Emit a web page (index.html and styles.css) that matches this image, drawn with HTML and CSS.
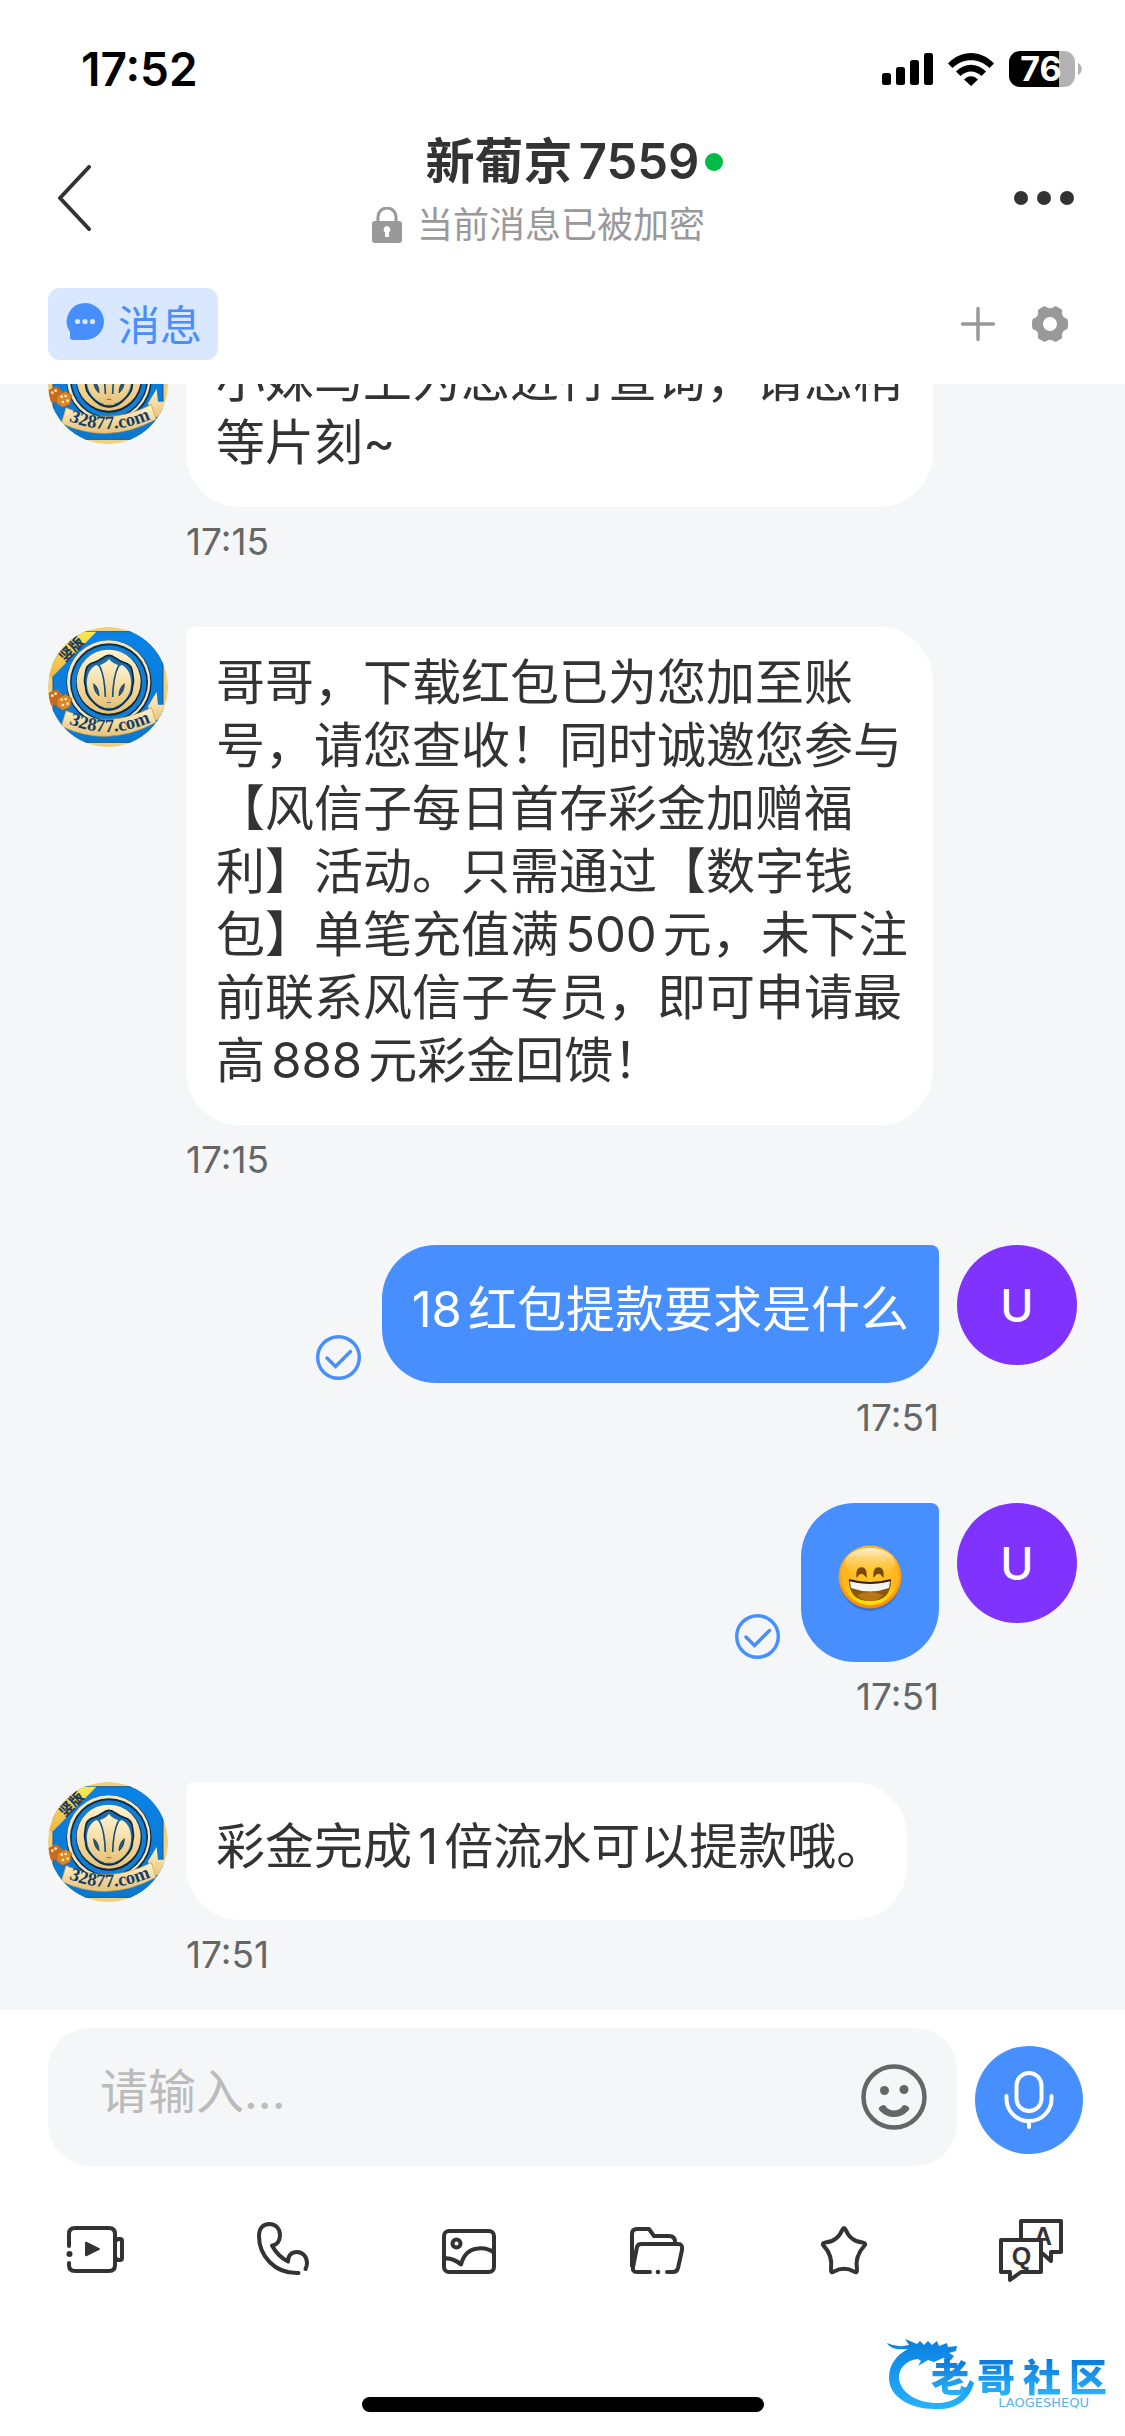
FILE: index.html
```html
<!DOCTYPE html>
<html lang="zh-CN">
<head>
<meta charset="utf-8">
<meta name="viewport" content="width=device-width, initial-scale=1">
<title>新葡京7559</title>
<link rel="stylesheet" href="styles.css">
</head>
<body>
<svg class="defs" aria-hidden="true">
  <defs>
    <linearGradient id="gold" x1="0" y1="0" x2="0" y2="1"><stop offset="0" stop-color="#fff3cf"/><stop offset="1" stop-color="#e8c276"/></linearGradient>
    <linearGradient id="blue" x1="0" y1="0" x2="0" y2="1"><stop offset="0" stop-color="#0a82e6"/><stop offset="1" stop-color="#0b78cf"/></linearGradient>
    <linearGradient id="corner" x1="0" y1="0" x2="0" y2="1"><stop offset="0" stop-color="#fbe94f"/><stop offset="1" stop-color="#f0b54a"/></linearGradient>
    <clipPath id="round"><circle cx="205" cy="202" r="180"/></clipPath>
    <symbol id="agent" viewBox="25 22 360 360">
      <g clip-path="url(#round)">
        <rect x="20" y="20" width="370" height="370" fill="#f0cf7d"/>
        <rect x="40" y="36" width="330" height="332" rx="6" fill="url(#blue)" stroke="#16588f" stroke-width="3"/>
        <path d="M20 36h150L40 170H20z" fill="url(#corner)"/>
        <text class="crest-corner" x="97" y="107" text-anchor="middle" transform="rotate(-45 92 92)">竖版</text>
        <circle cx="208" cy="190" r="128" fill="#0a3050"/>
        <circle cx="207" cy="187" r="125" fill="#f5e5b8"/>
        <circle cx="208" cy="188" r="117" fill="#0c2f4f"/>
        <circle cx="208" cy="189" r="112" fill="#127fd6"/>
        <circle cx="208" cy="189" r="99" fill="#10283c"/>
        <circle cx="207" cy="186" r="96" fill="url(#gold)"/>
        <path d="M208 107c-16 0-25 17-44 21-18 4-26 16-27 34-1 14-5 17-1 32 6 22-2 22 13 40 17 20 34 37 59 37s42-17 59-37c15-18 7-18 13-40 4-15 0-18-1-32-1-18-9-30-27-34-19-4-28-21-44-21z" fill="#1c6cab" stroke="#10283c" stroke-width="5"/>
        <path d="M208 118c8 10 16 14 27 18-14 36-14 70-16 112h-22c-2-42-2-76-16-112 11-4 19-8 27-18z" fill="url(#gold)"/>
        <path d="M170 136c21 10 29 52 32 128-36-6-58-36-60-66-2-26 6-52 28-62zM246 136c-21 10-29 52-32 128 36-6 58-36 60-66 2-26-6-52-28-62z" fill="url(#gold)"/>
        <path d="M193 250h30v14h-30z" fill="#e8c276"/>
        <path d="M162 192c0 16 5 27 16 37 0-16-5-29-16-37zM254 192c0 16-5 27-16 37 0-16 5-29 16-37z" fill="#1e5c8b" stroke="#10283c" stroke-width="2"/>
        <path d="M181 142c12 25 15 55 16 90M235 142c-12 25-15 55-16 90" fill="none" stroke="#16507c" stroke-width="5"/>
        <path d="M325 260l26-43 4 38h28v32l-45 20z" fill="url(#gold)"/>
        <path d="M22 222l28-14 18 16-6 28-40 8z" fill="#c96b1e"/>
        <path d="M52 236l26-12 18 12-5 26-22 10-18-12z" fill="#d98727" stroke="#b45d18" stroke-width="2"/>
        <g fill="#fff2bf"><circle cx="38" cy="228" r="4"/><circle cx="48" cy="222" r="4"/><circle cx="66" cy="240" r="4"/><circle cx="78" cy="238" r="4"/><circle cx="70" cy="256" r="4"/><circle cx="84" cy="252" r="4"/></g>
        <path d="M79 273Q205 330 335 264l14 44Q205 386 65 320z" fill="url(#gold)" stroke="#c79b49" stroke-width="2"/>
        <path id="banner" d="M76 308Q207 368 344 302" fill="none"/>
        <text class="crest-name"><textPath href="#banner" startOffset="50%" text-anchor="middle">32877.com</textPath></text>
      </g>
    </symbol>
    <symbol id="sent" viewBox="0 0 45 45">
      <circle cx="22.500" cy="22.500" r="20.800" fill="none" stroke="#478fff" stroke-width="3.400"/>
      <path d="M11 23l8.500 8.500L34.500 16.500" fill="none" stroke="#478fff" stroke-width="3.400" stroke-linecap="round"/>
    </symbol>
  </defs>
</svg>

<div class="app">
  <header class="top">
    <div class="status">
      <span class="clock">17:52</span>
      <div class="signals">
        <svg width="51" height="33" viewBox="0 0 51 33" aria-label="信号"><rect x="0" y="20" width="9" height="12" rx="2.500"/><rect x="14" y="14" width="9" height="18" rx="2.500"/><rect x="28" y="7" width="9" height="25" rx="2.500"/><rect x="42" y="0" width="9" height="32" rx="2.500"/></svg>
        <svg width="46" height="33" viewBox="0 0 46 33" aria-label="无线网络"><path d="M0 10.500C13-3.500 33-3.500 46 10.500L41.500 15C31 4.500 15 4.500 4.500 15zM8 18.500C17 9.500 29 9.500 38 18.500L33.500 23C27 17 19 17 12.500 23zM16 26.500c4-4.500 10-4.500 14 0L23 33z"/></svg>
        <svg class="cell" width="73" height="36" viewBox="0 0 73 36" aria-label="电量"><path d="M11 0h39v36H11A11 11 0 0 1 0 25V11A11 11 0 0 1 11 0z"/><path d="M50 0h5a11 11 0 0 1 11 11v14a11 11 0 0 1-11 11h-5zM69 12c5 2 5 10 0 12z" fill="#b3b3b3"/><text class="battery" x="32" y="30" text-anchor="middle">76</text></svg>
      </div>
    </div>
    <div class="nav">
      <button class="icon-btn back" aria-label="返回"><svg width="36" height="66" viewBox="0 0 36 66"><path d="M33 2L4 33l29 31" fill="none" stroke="#333" stroke-width="4" stroke-linecap="round" stroke-linejoin="round"/></svg></button>
      <div class="heading">
        <h1><span class="name">新葡京7559<i class="online"></i></span></h1>
        <p class="secure"><svg width="30" height="36" viewBox="0 0 30 36" aria-hidden="true"><path d="M6 16V10a9 9 0 0 1 18 0v6" fill="none" stroke="#999" stroke-width="3"/><path d="M3 14h24a3 3 0 0 1 3 3v16a3 3 0 0 1-3 3H3a3 3 0 0 1-3-3V17a3 3 0 0 1 3-3z" fill="#999"/><path d="M15 19a3.500 3.500 0 0 1 2 6.300V30h-4v-4.700A3.500 3.500 0 0 1 15 19z" fill="#fff"/></svg><span>当前消息已被加密</span></p>
      </div>
      <button class="icon-btn more" aria-label="更多"><svg width="60" height="14" viewBox="0 0 60 14"><g fill="#333"><circle cx="7" cy="7" r="7"/><circle cx="30" cy="7" r="7"/><circle cx="53" cy="7" r="7"/></g></svg></button>
    </div>
    <div class="tabs">
      <button class="tab"><svg width="38" height="38" viewBox="0 0 38 38" aria-hidden="true"><path d="M19 0a19 18.500 0 0 1 0 37H7q-3 0-3-3v-5A18.500 18.500 0 0 1 19 0z" fill="#478fff"/><g fill="#d9e7ff"><circle cx="11.500" cy="18.500" r="2.600"/><circle cx="19" cy="18.500" r="2.600"/><circle cx="26.500" cy="18.500" r="2.600"/></g></svg>消息</button>
      <div class="tab-actions">
        <button class="icon-btn" aria-label="添加"><svg width="36" height="36" viewBox="0 0 36 36"><path d="M18 2.500v31M2.500 18h31" stroke="#999" stroke-width="3.500" stroke-linecap="round"/></svg></button>
        <button class="icon-btn" aria-label="设置"><svg width="36" height="36" viewBox="0 0 36 36"><path fill="#999" fill-rule="evenodd" d="M12 .2Q13 0 14 .7q4 3.200 8 0Q23 0 24 .2l5.300 3q1 .8.700 2.300-.8 5.200 4 6.800 1.500.7 1.700 2 .6 3.700 0 7.400-.2 1.300-1.700 2-4.800 1.600-4 6.800.3 1.500-.7 2.300l-5.300 3q-1 .2-2-.5-4-3.200-8 0-1 .7-2 .5l-5.300-3q-1-.8-.7-2.300.8-5.200-4-6.800-1.500-.7-1.700-2-.6-3.700 0-7.400.2-1.300 1.700-2 4.800-1.600 4-6.800Q5.700 4 6.700 3.200zM18 11a7 7 0 1 0 0 14 7 7 0 0 0 0-14z"/></svg></button>
      </div>
    </div>
  </header>

  <main class="chat">
    <article class="msg received">
      <svg class="avatar" role="img" aria-label="客服头像"><use href="#agent"/></svg>
      <div class="body">
        <p class="bubble">小妹马上为您进行查询，请您稍等片刻~</p>
        <time>17:15</time>
      </div>
    </article>
    <article class="msg received">
      <svg class="avatar" role="img" aria-label="客服头像"><use href="#agent"/></svg>
      <div class="body">
        <p class="bubble">哥哥，下载红包已为您加至账号，请您查收！同时诚邀您参与【风信子每日首存彩金加赠福利】活动。只需通过【数字钱包】单笔充值满500元，未下注前联系风信子专员，即可申请最高888元彩金回馈！</p>
        <time>17:15</time>
      </div>
    </article>
    <article class="msg own">
      <div class="body">
        <div class="line"><svg class="tick" aria-label="已送达"><use href="#sent"/></svg><p class="bubble">18红包提款要求是什么</p></div>
        <time>17:51</time>
      </div>
      <span class="avatar user">U</span>
    </article>
    <article class="msg own">
      <div class="body">
        <div class="line"><svg class="tick" aria-label="已送达"><use href="#sent"/></svg><div class="bubble emoji">
          <svg width="66" height="69" viewBox="0 0 66 69" role="img" aria-label="笑脸">
            <defs>
              <radialGradient id="face" cx=".5" cy=".45" r=".55"><stop offset="0" stop-color="#ffc928"/><stop offset=".8" stop-color="#ffb41e"/><stop offset="1" stop-color="#f08208"/></radialGradient>
              <linearGradient id="shine" x1="0" y1="0" x2="0" y2="1"><stop offset="0" stop-color="#fff3dc"/><stop offset="1" stop-color="#ffc42a" stop-opacity="0"/></linearGradient>
              <linearGradient id="chin" x1="0" y1="0" x2="0" y2="1"><stop offset=".6" stop-color="#ffe600" stop-opacity="0"/><stop offset="1" stop-color="#ffe600"/></linearGradient>
            </defs>
            <ellipse cx="33" cy="35.500" rx="31" ry="31.500" fill="#2c62b8" opacity=".6"/>
            <circle cx="33" cy="33" r="31.500" fill="url(#face)"/>
            <circle cx="33" cy="33" r="28" fill="url(#chin)"/>
            <ellipse cx="33" cy="19" rx="25" ry="15" fill="url(#shine)"/>
            <path d="M20 32q-.500-8 4.500-8t4.500 8q-4.500-6-9 0zM37 32q-.500-8 4.500-8t4.500 8q-4.500-6-9 0z" fill="#7a4a08" stroke="#7a4a08" stroke-width="1.500"/>
            <path d="M12 36q21 6 42 0 0 21-21 21T12 36z" fill="#8a5608"/>
            <path d="M13 37q20 6 40 0l-1 7q-19 7-38 0z" fill="#f4f4f2"/>
            <path d="M20 51q13-6 26 0-5 6-13 6t-13-6z" fill="#b77618"/>
            <path d="M12 36q21 6 42 0" fill="none" stroke="#3b2206" stroke-width="2"/>
          </svg>
        </div></div>
        <time>17:51</time>
      </div>
      <span class="avatar user">U</span>
    </article>
    <article class="msg received">
      <svg class="avatar" role="img" aria-label="客服头像"><use href="#agent"/></svg>
      <div class="body">
        <p class="bubble">彩金完成1倍流水可以提款哦。</p>
        <time>17:51</time>
      </div>
    </article>
  </main>

  <footer class="bottom">
    <form class="composer">
      <div class="field">
        <input type="text" placeholder="请输入..." aria-label="请输入">
        <button type="button" class="icon-btn" aria-label="表情"><svg width="66" height="66" viewBox="0 0 66 66"><circle cx="33" cy="33" r="30.500" fill="none" stroke="#666" stroke-width="4.500"/><circle cx="23.500" cy="26.500" r="4.500" fill="#666"/><circle cx="43" cy="25.500" r="4.500" fill="#666"/><path d="M20 42q4-3 6 2 7 5 14 0 2-5 6-2 4 2 1 5-6 6-14 6t-14-6q-3-3 1-5z" fill="#666"/></svg></button>
      </div>
      <button type="button" class="mic" aria-label="语音"><svg width="50" height="58" viewBox="0 0 50 58"><g fill="none" stroke="#fff" stroke-width="4" stroke-linecap="round"><rect x="12.500" y="2" width="25" height="38" rx="12.500"/><path d="M2.500 25v3a22.500 22 0 0 0 45 0v-3M25 50v6"/></g></svg></button>
    </form>
    <nav class="tools">
      <button class="icon-btn" aria-label="视频"><svg width="66" height="66" viewBox="0 0 66 66"><g fill="none" stroke="#333" stroke-width="4" stroke-linecap="round" stroke-linejoin="round"><path d="M8 29V17q0-6 6-6h34q6 0 6 6v31q0 6-6 6H14q-6 0-6-6v-2"/><path d="M54 24l3-2h2q2 0 2 2v17q0 2-2 2h-2l-3-2"/></g><circle cx="8.500" cy="37" r="3" fill="#333"/><path d="M24 26q0-2 2-1l12 6q2 1 0 2l-12 6q-2 1-2-1z" fill="#333"/></svg></button>
      <button class="icon-btn" aria-label="电话"><svg width="66" height="66" viewBox="0 0 66 66"><path d="M50.500 56C26 57 11 38 11 19 11 11 15 7 21.500 7 28 7 32 12 32 18c0 6-3 10-8 10.500C28 36 33 41 40 44.500 40 38 44 35 49 35c6 0 10 5 10 11 0 2-.500 4-1.500 6" fill="none" stroke="#333" stroke-width="4" stroke-linecap="round" stroke-linejoin="round"/></svg></button>
      <button class="icon-btn" aria-label="图片"><svg width="66" height="66" viewBox="0 0 66 66"><g fill="none" stroke="#333" stroke-width="4"><rect x="8" y="14" width="50" height="41" rx="5"/><circle cx="20.500" cy="26.500" r="4"/><path d="M8 41.500q9-1 17 6 4-15 17-16 9-1 16 4" stroke-linejoin="round"/></g></svg></button>
      <button class="icon-btn" aria-label="文件"><svg width="66" height="66" viewBox="0 0 66 66"><g fill="none" stroke="#333" stroke-width="4" stroke-linecap="round" stroke-linejoin="round"><path d="M27 55H14q-5 0-4-5l4-20q1-3 4-3h37q5 0 4 6l-4 18q-1 4-5 4h-6"/><path d="M9 49V17q0-5 5-5h12l5 7h15q6 0 6 6"/></g><circle cx="35" cy="55" r="2.300" fill="#333"/></svg></button>
      <button class="icon-btn" aria-label="收藏"><svg width="66" height="66" viewBox="0 0 66 66"><path d="M31.500 12.500q1.500-3 3 0 5 12 17 13 4 .500 2 3-10 11-7.500 24 .500 4-3 2-10-5.500-20 0-3.500 2-3-2 2-14-7.500-24-2-2.500 2-3 12-1 17-13z" fill="none" stroke="#333" stroke-width="4" stroke-linejoin="round"/></svg></button>
      <button class="icon-btn" aria-label="常见问题"><svg width="66" height="66" viewBox="0 0 66 66"><g fill="none" stroke="#333" stroke-width="4" stroke-linejoin="round"><path d="M23 21V4h40v31H53v9l-9-8"/><path d="M3 23h40v32H23l-11 8v-8H3z"/></g><text class="qa-a" x="45" y="28" text-anchor="middle">A</text><path d="M5 25h36v28H5z" fill="#fff"/><text class="qa-q" x="23.500" y="48" text-anchor="middle">Q</text></svg></button>
    </nav>
    <div class="home"></div>
  </footer>

  <aside class="watermark">
    <svg class="dragon" width="96" height="78" viewBox="0 0 96 78" aria-hidden="true">
      <defs><linearGradient id="sea" x1="0" y1="0" x2="0" y2="1"><stop offset="0" stop-color="#0a7fe0"/><stop offset="1" stop-color="#27b2fb"/></linearGradient></defs>
      <path fill="url(#sea)" d="M0 11q10 5 22 2l-4-6 12 5 3-3 4 4 4-4 4 4 5-4 2 5 8-3 1 4 9-1-1 5-7 2 5 3-3 4-8-2-9 4-6-2-10 6 3-5-3-2C18 28 11 38 12 47c2 14 18 24 38 24 15 0 26-6 33-23l4 3C82 69 68 78 48 77 22 77 2 64 2 46 2 33 9 23 21 17 12 18 3 17 0 11z"/>
    </svg>
    <div class="brand"><span>老</span><span>哥</span><span>社</span><span>区</span></div>
    <div class="pinyin">LAOGESHEQU</div>
  </aside>
</div>
</body>
</html>
```
FILE: styles.css
```css
* {
  box-sizing: border-box;
}

body,
h1,
p {
  margin: 0;
}

body {
  background: #fff;
  color: #333;
  font-family: Inter, "Noto Sans CJK SC", sans-serif;
  text-autospace: normal;
}

svg {
  display: block;
  flex: none;
}

button {
  padding: 0;
  border: 0;
  background: none;
  font: inherit;
  color: inherit;
}

.defs {
  position: absolute;
  width: 0;
  height: 0;
}

.app {
  position: relative;
  display: flex;
  flex-direction: column;
  height: 100vh;
  overflow: hidden;
}

.icon-btn {
  display: flex;
  align-items: center;
  justify-content: center;
}

/* Header */
.top,
.bottom {
  flex: none;
  background: #fff;
}

.status {
  display: flex;
  align-items: center;
  justify-content: space-between;
  height: 129px;
  padding: 9px 43px 0 81px;
  color: #000;
}

.clock {
  font-size: 46px;
  font-weight: 600;
}

.signals {
  display: flex;
  align-items: center;
  gap: 15px;
}

.cell {
  overflow: visible;
}

.battery {
  fill: #fff;
  font-size: 34px;
  font-weight: 700;
}

.nav {
  display: grid;
  grid-template-columns: 150px 1fr 150px;
  align-items: center;
  height: 135px;
}

.back {
  justify-self: start;
  padding-left: 56px;
}

.more {
  justify-self: end;
  padding-right: 51px;
}

.heading {
  padding-bottom: 12px;
  text-align: center;
}

h1 {
  font-size: 49px;
  font-weight: 600;
  line-height: 66px;
}

.name {
  position: relative;
}

.online {
  position: absolute;
  top: 50%;
  left: 100%;
  width: 18px;
  height: 18px;
  margin: -9px 0 0 6px;
  border-radius: 50%;
  background: #00bb46;
}

.secure {
  display: flex;
  align-items: center;
  justify-content: center;
  gap: 15px;
  padding-right: 48px;
  color: #999;
  font-size: 36px;
  line-height: 60px;
}

.tabs {
  display: flex;
  align-items: center;
  justify-content: space-between;
  height: 120px;
  padding: 0 57px 0 48px;
}

.tab {
  display: flex;
  align-items: center;
  gap: 14px;
  height: 72px;
  padding: 0 16px 4px 18px;
  border-radius: 12px;
  background: #d9e7ff;
  color: #478fff;
  font-size: 42px;
}

.tab-actions {
  display: flex;
  gap: 36px;
}

/* Conversation */
.chat {
  display: flex;
  flex: 1;
  flex-direction: column;
  justify-content: flex-end;
  gap: 66px;
  min-height: 0;
  overflow: hidden;
  padding: 0 48px 36px;
  background: #f5f6f8;
}

.msg {
  display: flex;
  flex: none;
  align-items: flex-start;
  gap: 18px;
}

.own {
  justify-content: flex-end;
}

.avatar {
  flex: none;
  width: 120px;
  height: 120px;
  border-radius: 50%;
}

.user {
  display: flex;
  align-items: center;
  justify-content: center;
  background: #8032ff;
  color: #fff;
  font-size: 45px;
  font-weight: 500;
}

.body {
  display: flex;
  flex-direction: column;
  align-items: flex-start;
}

.own .body {
  align-items: flex-end;
}

.line {
  display: flex;
  align-items: flex-end;
  gap: 21px;
}

.tick {
  width: 45px;
  height: 45px;
  margin-bottom: 3px;
}

.bubble {
  display: flex;
  align-items: center;
  min-width: 138px;
  min-height: 138px;
  max-width: 747px;
  padding: 24px 22px 33px 30px;
  border-radius: 8px 54px 54px 54px;
  background: #fff;
  font-size: 49px;
  line-height: 63px;
}

.own .bubble {
  padding-right: 30px;
  border-radius: 54px 8px 54px 54px;
  background: #478fff;
  color: #fff;
}

.own .emoji {
  justify-content: center;
  min-height: 159px;
}

time {
  margin-top: 15px;
  color: #666;
  font-size: 37px;
  line-height: 39px;
}

/* Composer */
.composer {
  display: flex;
  align-items: flex-end;
  gap: 18px;
  padding: 18px 42px 0 48px;
}

.field {
  display: flex;
  flex: 1;
  align-items: center;
  height: 138px;
  padding: 0 30px 0 52px;
  border-radius: 42px;
  background: #f5f6f8;
}

.field input {
  flex: 1;
  min-width: 0;
  padding: 0 0 12px;
  border: 0;
  outline: 0;
  background: none;
  color: #333;
  font: inherit;
  font-size: 48px;
  text-autospace: no-autospace;
}

.field input::placeholder {
  color: #bbb;
  opacity: 1;
}

.mic {
  display: flex;
  flex: none;
  align-items: center;
  justify-content: center;
  width: 108px;
  height: 108px;
  margin-bottom: 12px;
  border-radius: 50%;
  background: #478fff;
}

.tools {
  display: grid;
  grid-template-columns: repeat(6, 1fr);
  align-items: center;
  height: 168px;
}

.home {
  width: 402px;
  height: 15px;
  margin: 63px auto 24px;
  border-radius: 8px;
  background: #000;
}

.qa-a,
.qa-q {
  fill: #333;
  font-family: "Liberation Sans", sans-serif;
  font-size: 25px;
  font-weight: 700;
}

/* Agent picture lettering */
.crest-corner {
  fill: #1d3a5c;
  font-family: "Noto Sans CJK SC", sans-serif;
  font-size: 42px;
  font-weight: 900;
}

.crest-name {
  fill: #173d66;
  font-family: "Liberation Serif", serif;
  font-size: 56px;
  font-weight: 700;
}

/* Community mark laid over the page corner */
.watermark {
  position: absolute;
  right: 18px;
  bottom: 26px;
  display: flex;
  flex-direction: column;
  align-items: flex-end;
  width: 220px;
  height: 78px;
  padding-top: 26px;
}

.dragon {
  position: absolute;
  top: 0;
  left: 0;
}

.brand {
  position: relative;
  display: flex;
  gap: 8px;
  background: linear-gradient(#0a78dc, #2ab4fb);
  background-clip: text;
  color: transparent;
  font-size: 38px;
  font-weight: 900;
  line-height: 38px;
}

.pinyin {
  position: relative;
  margin-right: 18px;
  color: #55b4f2;
  font-family: "DejaVu Sans", sans-serif;
  font-size: 13px;
  line-height: 13px;
}
```
